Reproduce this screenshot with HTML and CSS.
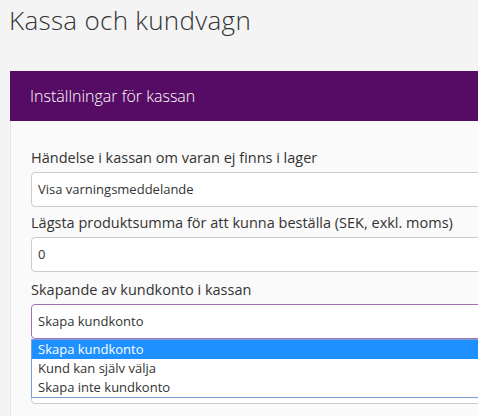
FILE: index.html
```html
<html lang="sv">
  <head>
    <meta charset="UTF-8" />
    <title>Kassa och kundvagn</title>
    <link rel="stylesheet" href="styles.css">
  </head>
  <body>
    <h1 class="page-title">Kassa och kundvagn</h1>
    <div class="panel">
      <div class="panel-heading">Inställningar för kassan</div>
      <div class="panel-body">
        <div class="form-group">
          <label class="field-label">Händelse i kassan om varan ej finns i lager</label>
          <div class="field">Visa varningsmeddelande</div>
        </div>
        <div class="form-group">
          <label class="field-label">Lägsta produktsumma för att kunna beställa (SEK, exkl. moms)</label>
          <div class="field">0</div>
        </div>
        <div class="form-group account">
          <label class="field-label">Skapande av kundkonto i kassan</label>
          <div class="field select-open">Skapa kundkonto
            <ul class="dropdown">
              <li class="option selected">Skapa kundkonto</li>
              <li class="option">Kund kan själv välja</li>
              <li class="option">Skapa inte kundkonto</li>
            </ul>
          </div>
        </div>
        <!-- next field, covered by the open select list -->
        <div class="form-group">
          <div class="field-label">&nbsp;</div>
          <div class="field"></div>
        </div>
      </div>
    </div>
  </body>
</html>
```

FILE: styles.css
```css
/* Page base */
html,
body {
  margin: 0;
  padding: 0;
}
* {
  box-sizing: border-box;
}
body {
  font-family: "Open Sans", sans-serif;
  background: #f4f4f4;
  color: #333;
  overflow: hidden;
  height: 416px;
}
.page-title {
  margin: 0;
  padding: 3px 0 0 9px;
  height: 71px;
  font-size: 26px;
  font-weight: 300;
  line-height: 34px;
  color: #333;
  letter-spacing: 0.3px;
}
/* Settings panel */
.panel {
  margin-left: 10px;
  width: 640px;
}
.panel-heading {
  height: 50px;
  line-height: 50px;
  padding-left: 20px;
  background: #560b64;
  color: #fff;
  font-size: 16px;
  font-weight: 300;
}
.panel-body {
  background: #fafafa;
  border-left: 1px solid #e6e6e6;
  padding: 27px 20px 20px 20px;
}
.form-group {
  margin-bottom: 6px;
}
.form-group.account {
  margin-top: 8px;
}
.field-label {
  display: block;
  font-size: 14.5px;
  line-height: 20px;
  margin-bottom: 4px;
}
.field {
  position: relative;
  height: 35px;
  line-height: 33px;
  padding-left: 6px;
  font-size: 13px;
  background: #fff;
  border: 1px solid #ccc;
  border-radius: 4px;
}
.field.select-open {
  border-color: #a373b1;
}
/* Native select popup */
.dropdown {
  position: absolute;
  top: 34px;
  left: -1px;
  right: -1px;
  margin: 0;
  padding: 0;
  list-style: none;
  background: #fff;
  border: 1px solid #7f9ed8;
  z-index: 2;
}
.option {
  height: 19px;
  line-height: 19px;
  padding-left: 6px;
  font-size: 13px;
  color: #333;
}
.option.selected {
  background: #1e90ff;
  color: #fff;
}
```
